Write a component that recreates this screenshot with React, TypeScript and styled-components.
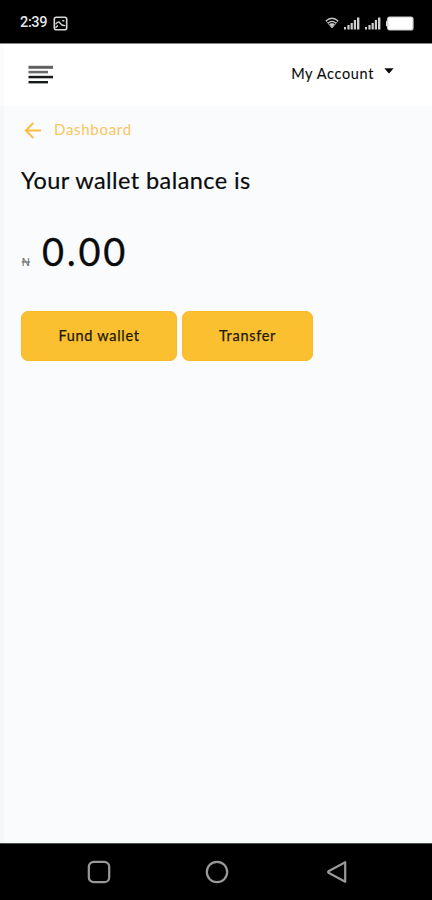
import React from "react";
import styled, { createGlobalStyle } from "styled-components";

const GlobalStyle = createGlobalStyle`
  * { box-sizing: border-box; }
  body { margin: 0; background: #f9fbfd; }
  button { font: inherit; color: inherit; border: 0; background: none; padding: 0; }
`;

const Screen = styled.div`
  display: flex;
  flex-direction: column;
  width: 432px;
  height: 900px;
  font-family: Lato, "Open Sans", sans-serif;
  color: #0b0b0c;
  background: #f9fbfd;
  overflow: hidden;
`;

const StatusBar = styled.div`
  display: flex;
  align-items: center;
  justify-content: space-between;
  height: 44px;
  flex: none;
  padding: 3px 18px 0 20px;
  background: #000;
  border-bottom: 1px solid #858585;
`;

const StatusGroup = styled.div<{ $gap: number }>`
  display: flex;
  align-items: center;
  gap: ${(p) => p.$gap}px;
`;

const Clock = styled.span`
  width: 27px;
  font: 500 14.5px/18px Roboto, sans-serif;
  letter-spacing: -0.35px;
  color: #e6e6e6;
`;

const Header = styled.header`
  display: flex;
  align-items: flex-start;
  justify-content: space-between;
  height: 62px;
  flex: none;
  padding: 0 38px 0 24px;
  background: #fff;
  border-left: 4px solid #fcfcfc;
`;

const MenuButton = styled.button`
  display: flex;
  margin-top: 21px;
`;

const AccountButton = styled.button`
  display: flex;
  align-items: flex-start;
  gap: 10px;
  margin-top: 20px;
  font-size: 14.5px;
  line-height: 20px;
  letter-spacing: 0.65px;
  -webkit-text-stroke: 0.1px #0b0b0c;
  white-space: nowrap;

  svg { margin-top: 4px; }
`;

const Content = styled.main`
  flex: 1;
  padding: 12px 17px 0;
  border-left: 4px solid #f5f7f9;
`;

const BackLink = styled.div`
  display: flex;
  align-items: center;
  gap: 12px;
  height: 22px;
  padding-left: 3px;
  font-size: 15px;
  line-height: 22px;
  letter-spacing: 0.7px;
  color: #f8c65c;

  svg { margin-top: 3px; }
`;

const Heading = styled.h1`
  margin: 25px 0 0;
  font-size: 23.5px;
  font-weight: 400;
  line-height: 30px;
  letter-spacing: 0.42px;
  white-space: nowrap;
  -webkit-text-stroke: 0.2px #0b0b0c;
`;

const Balance = styled.div`
  display: flex;
  align-items: baseline;
  height: 44px;
  margin-top: 34px;
  line-height: 44px;
`;

const Currency = styled.span`
  width: 21px;
  font-size: 12px;
  color: #6b6e71;
`;

const Amount = styled.span`
  font-size: 38px;
  letter-spacing: 2.7px;
  -webkit-text-stroke: 0.3px #0b0b0c;
`;

const Actions = styled.div`
  display: flex;
  gap: 5px;
  margin-top: 38px;
`;

const ActionButton = styled.button<{ $width: number }>`
  width: ${(p) => p.$width}px;
  height: 50px;
  padding-bottom: 2px;
  border: 1px solid #f8b92c;
  border-radius: 7px;
  background: #fbc02f;
  font-size: 14.5px;
  letter-spacing: 0.7px;
  color: #211a08;
  -webkit-text-stroke: 0.25px #211a08;
`;

const NavBar = styled.nav`
  display: flex;
  gap: 94px;
  align-items: center;
  height: 57px;
  flex: none;
  padding-left: 87px;
  background: #000;
  border-top: 1px solid #4a4d4a;

  svg:last-child { margin-left: 3px; }
`;

const PictureIcon = () => (
  <svg width="15" height="15" viewBox="0 0 15 15" fill="none" stroke="#d8d8d8" strokeWidth="1.6">
    <rect x="1.3" y="1.3" width="12.4" height="12.4" rx="2" />
    <path d="M2.6 8.3Q5.3 4.5 7 7.2T12.3 9.6" strokeWidth="1.4" />
    <path d="M9.3 4.7h2M2.5 11.6 5 9.5" strokeWidth="1.4" />
  </svg>
);

const WifiIcon = () => (
  <svg width="14" height="12" viewBox="0 0 14 12" fill="none" stroke="#c4c4c4" strokeWidth="1.3">
    <path d="M.8 4Q7-1.5 13.2 4M3 6.2q4-3.6 8 0" />
    <path d="M4.5 7.3Q7 5.4 9.5 7.3L7 10.8Z" fill="#c4c4c4" strokeWidth=".5" />
    <path d="m1 4 6 7 6-7" strokeWidth=".7" />
  </svg>
);

const SignalIcon = () => (
  <svg width="16" height="13" viewBox="0 0 16 13" fill="#d0d0d0">
    <rect x="0" y="10" width="2" height="2.5" />
    <rect x="3.4" y="8" width="2.2" height="4.5" />
    <rect x="6.6" y="6" width="2.2" height="6.5" />
    <rect x="9.8" y="3" width="2.2" height="9.5" />
    <rect x="13" y="0.5" width="2.4" height="12" />
  </svg>
);

const BatteryIcon = () => (
  <svg width="28" height="15" viewBox="0 0 28 15">
    <rect x="0" y="4.5" width="3" height="6" rx="1" fill="#ddd" />
    <rect x="1.6" y="1" width="25.4" height="13" rx="2" fill="#fff" stroke="#ccc" strokeWidth="1.2" />
  </svg>
);

const MenuIcon = () => (
  <svg width="26" height="20" viewBox="0 0 26 20">
    <rect x="0.5" y="0.8" width="24.5" height="3" fill="#606060" />
    <rect x="0.5" y="5.8" width="19.5" height="2.6" fill="#6b6d6b" />
    <rect x="0.5" y="10.8" width="24.5" height="2.5" fill="#161a19" />
    <rect x="0.5" y="16" width="19.5" height="2.4" fill="#161a19" />
  </svg>
);

const CaretIcon = () => (
  <svg width="10" height="6" viewBox="0 0 10 6">
    <path d="M.4.2h9.2L5.6 5Q5 5.7 4.4 5Z" fill="#0b0b0c" />
  </svg>
);

const BackIcon = () => (
  <svg width="18" height="17" viewBox="0 0 18 17" fill="none" stroke="#fabd3e" strokeWidth="1.9">
    <path d="M9.3 1 1.8 8.5 9.3 16M2 8.5h15" />
  </svg>
);

const RecentsIcon = () => (
  <svg width="24" height="24" viewBox="0 0 24 24" fill="none" stroke="#999" strokeWidth="2.2">
    <rect x="1.8" y="1.8" width="20.4" height="20.4" rx="5" />
  </svg>
);

const HomeIcon = () => (
  <svg width="24" height="24" viewBox="0 0 24 24" fill="none" stroke="#999" strokeWidth="2.2">
    <circle cx="12" cy="12" r="10.2" />
  </svg>
);

const PreviousIcon = () => (
  <svg width="22" height="24" viewBox="0 0 22 24" fill="none" stroke="#999" strokeWidth="2.2" strokeLinejoin="round">
    <path d="M19.2 2.2v19.6L2.5 12.7Q1.5 12 2.5 11.3Z" />
  </svg>
);

export default function App() {
  return (
    <Screen>
      <GlobalStyle />
      <StatusBar>
        <StatusGroup $gap={6}>
          <Clock>2:39</Clock>
          <PictureIcon />
        </StatusGroup>
        <StatusGroup $gap={5}>
          <WifiIcon />
          <SignalIcon />
          <SignalIcon />
          <BatteryIcon />
        </StatusGroup>
      </StatusBar>
      <Header>
        <MenuButton aria-label="Menu"><MenuIcon /></MenuButton>
        <AccountButton>My Account<CaretIcon /></AccountButton>
      </Header>
      <Content>
        <BackLink><BackIcon />Dashboard</BackLink>
        <Heading>Your wallet balance is</Heading>
        <Balance>
          <Currency>₦</Currency>
          <Amount>0.00</Amount>
        </Balance>
        <Actions>
          <ActionButton $width={156}>Fund wallet</ActionButton>
          <ActionButton $width={131}>Transfer</ActionButton>
        </Actions>
      </Content>
      <NavBar>
        <RecentsIcon />
        <HomeIcon />
        <PreviousIcon />
      </NavBar>
    </Screen>
  );
}
